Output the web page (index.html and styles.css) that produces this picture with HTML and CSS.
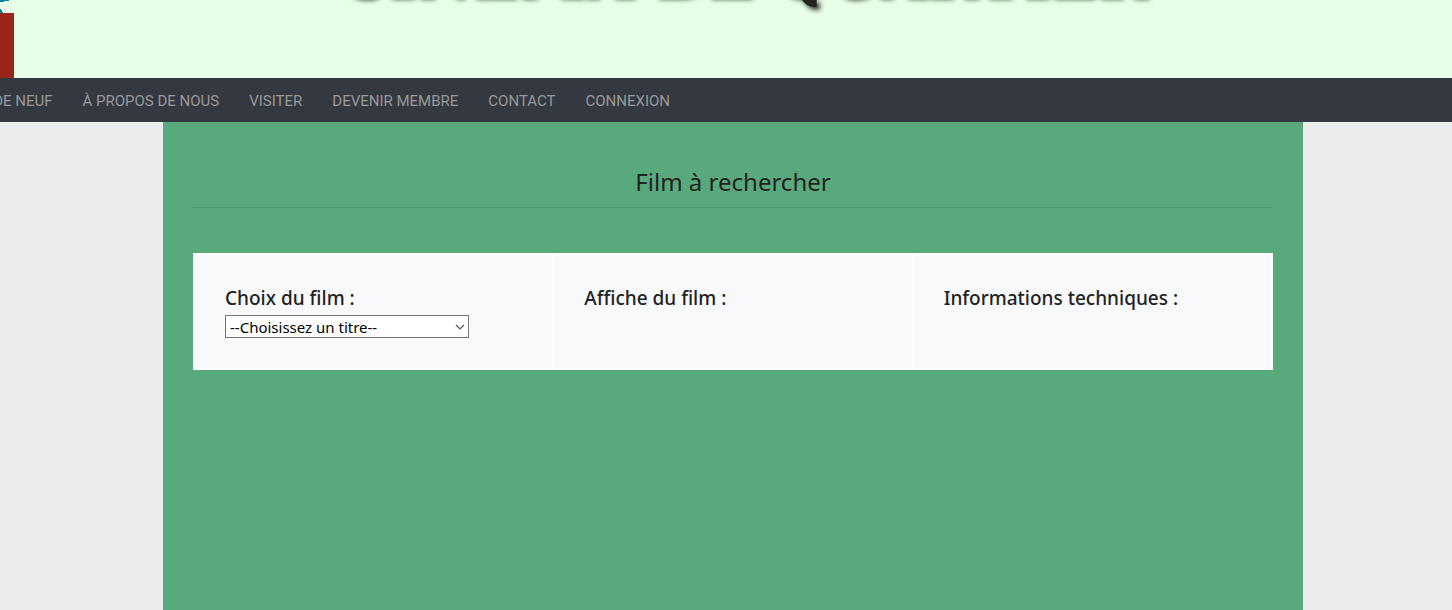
FILE: index.html
```html
<!DOCTYPE html>
<html lang="fr">
<head>
<meta charset="utf-8">
<title>Cinéma de quartier</title>
<link rel="stylesheet" href="styles.css">
</head>
<body>
<header class="banner">
  <svg class="logo" viewBox="0 0 14 78" aria-hidden="true" shape-rendering="crispEdges">
    <path fill="#087f9f" d="M0 0h9v1H4v1H0zM0 9h1v1h1v2h1v1H0z"/>
    <path fill="#9a261b" d="M0 13h14v65H0z"/>
  </svg>
  <h1 class="site-title">CINÉMA DE QUARTIER</h1>
</header>
<nav class="menu">
  <ul class="menu-list">
    <li><a href="#neuf">QUOI DE NEUF</a></li>
    <li><a href="#propos">À PROPOS DE NOUS</a></li>
    <li><a href="#visiter">VISITER</a></li>
    <li><a href="#membre">DEVENIR MEMBRE</a></li>
    <li><a href="#contact">CONTACT</a></li>
    <li><a href="#connexion">CONNEXION</a></li>
  </ul>
</nav>
<div class="content">
  <main class="page">
    <h2 class="page-title">Film à rechercher</h2>
    <div class="panels">
      <section class="panel">
        <label class="panel-title" for="film">Choix du film :</label>
        <div class="select-box">
          <select class="film-select" id="film"><option>--Choisissez un titre--</option></select>
          <svg class="chevron" viewBox="0 0 10 6" aria-hidden="true"><path d="M1 1l4 4 4-4" fill="none" stroke="#555" stroke-width="1.2"/></svg>
        </div>
      </section>
      <section class="panel"><h3 class="panel-title">Affiche du film :</h3></section>
      <section class="panel"><h3 class="panel-title">Informations techniques :</h3></section>
    </div>
  </main>
</div>
</body>
</html>
```
FILE: styles.css
```css
* { box-sizing: border-box; }
body {
  margin: 0;
  min-height: 100vh;
  display: flex;
  flex-direction: column;
  overflow-x: hidden;
  background: #ececec;
  color: #222;
  font-family: "Noto Sans", sans-serif;
}
.banner {
  position: relative;
  height: 78px;
  padding-left: 32px;
  overflow: hidden;
  background: #e6ffe6;
}
.logo {
  position: absolute;
  left: 0;
  top: 0;
  width: 14px;
  height: 78px;
}
.site-title {
  margin: -57px 0 0;
  text-align: center;
  white-space: nowrap;
  font: bold 61px/64px "DejaVu Serif", serif;
  color: #222;
  text-shadow: 3px 3px 5px #222;
}
.menu {
  overflow: hidden;
  background: #343840;
}
.menu-list {
  display: flex;
  gap: 30px;
  margin: 0 0 0 -45px;
  padding: 0;
  list-style: none;
  white-space: nowrap;
}
.menu a {
  display: block;
  padding-top: 2px;
  font-family: Roboto, sans-serif;
  font-size: 15px;
  line-height: 42px;
  color: #999;
  text-decoration: none;
}
.content {
  flex: 1;
  display: flex;
  justify-content: center;
  padding-left: 14px;
}
.page {
  width: 100%;
  max-width: 1140px;
  padding: 40px 30px;
  background: #58aa7c;
}
.page-title {
  margin: 0 0 45px;
  padding-bottom: 5px;
  border-bottom: 1px solid #4e9b70;
  text-align: center;
  font-size: 24px;
  line-height: 40px;
  font-weight: 400;
}
.panels {
  display: grid;
  grid-template-columns: repeat(3, 1fr);
  gap: 2px;
  padding: 2px;
  background: #fff;
}
.panel {
  min-height: 113px;
  padding: 28px 30px;
  background: #f8f9fb;
}
.panel-title {
  display: block;
  margin: 0 0 2px;
  font-size: 19px;
  line-height: 30px;
  font-weight: 500;
}
.select-box {
  position: relative;
  width: 244px;
  max-width: 100%;
}
.film-select {
  display: block;
  width: 100%;
  height: 23px;
  padding: 0 4px;
  border: 1px solid #767676;
  border-radius: 0;
  appearance: none;
  background: #fff;
  color: #000;
  font-family: inherit;
  font-size: 15px;
}
.chevron {
  position: absolute;
  right: 4px;
  top: 9px;
  width: 10px;
  height: 6px;
  pointer-events: none;
}
```
